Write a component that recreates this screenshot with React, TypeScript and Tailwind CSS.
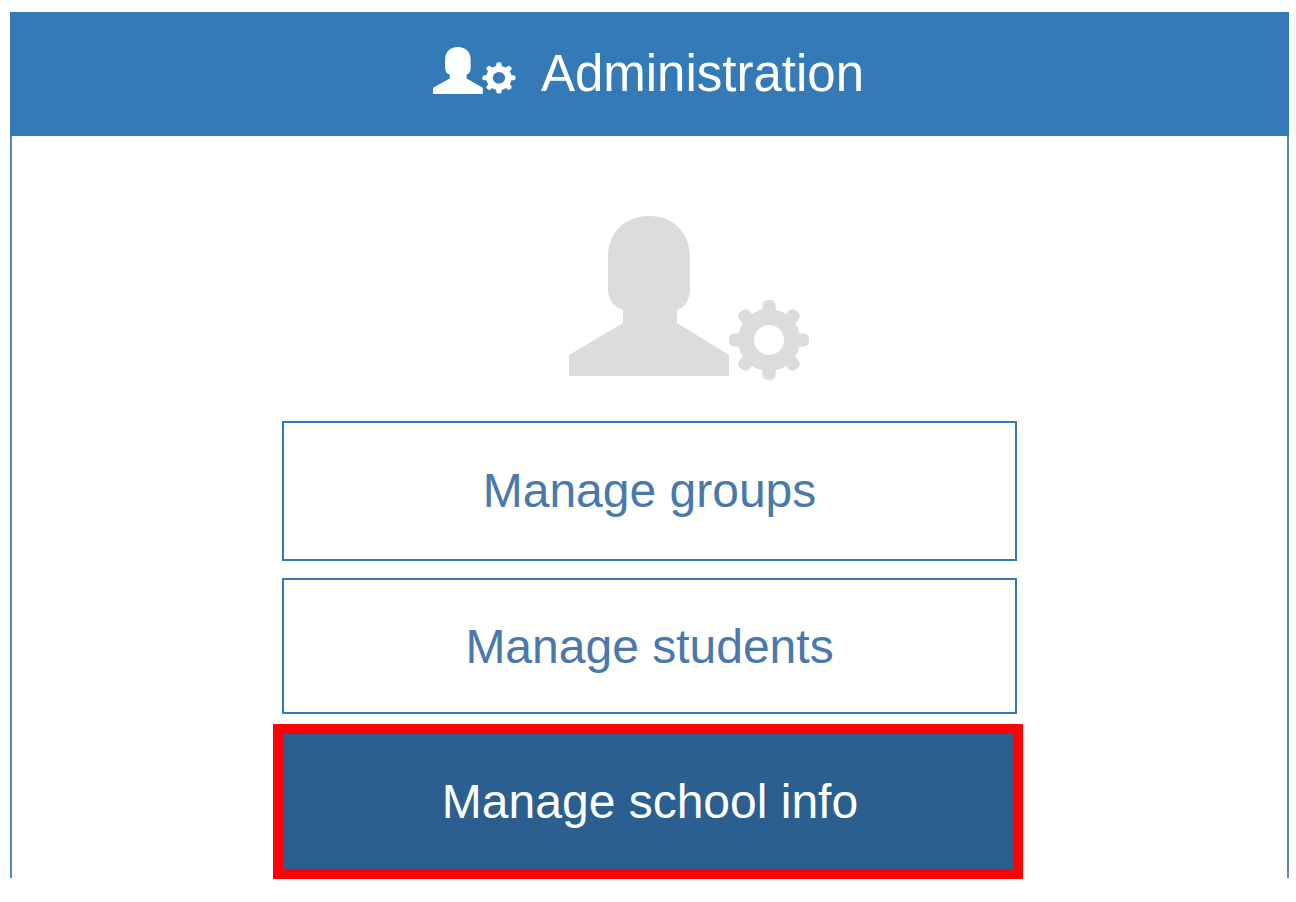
const TEETH = [0, 45, 90, 135, 180, 225, 270, 315]

interface AdminIconProps {
  className: string
  fill: string
  gearX: number
  gearY: number
  gearSize: number
  stretch?: boolean
}

// person plus gear, person is 160 units wide
function AdminIcon({ className, fill, gearX, gearY, gearSize, stretch }: AdminIconProps) {
  const scale = gearSize / 40
  return (
    <svg className={className} viewBox="0 0 270 160" fill={fill} preserveAspectRatio={stretch ? 'none' : undefined}>
      <path d="M80 0C106 0 121 18 121 42V72C121 84 116 91 108 94V107L160 139V160H0V139L54 107V94C45 91 39 84 39 72V42C39 18 54 0 80 0Z" />
      <g transform={`translate(${gearX} ${gearY}) scale(${scale})`}>
        <circle r="23" fill="none" stroke={fill} strokeWidth="16" />
        {TEETH.map((angle) => (
          <rect key={angle} x="-6.5" y="-40" width="13" height="16" rx="5" transform={`rotate(${angle})`} />
        ))}
      </g>
    </svg>
  )
}

export default function App() {
  return (
    <div className="h-[902px] w-[1296px] overflow-hidden bg-white pl-[10px] pt-3 font-['Liberation_Sans',Arial,sans-serif]">
      <section className="h-[866px] w-[1279px] border-x-2 border-[#4f8bc0]">
        <header className="-mx-[2px] flex h-[124px] items-center justify-center bg-[#337ab7] pb-[2px] pr-[2px] text-white">
          <AdminIcon className="mb-[5px] h-[47px] w-[84px]" fill="#ffffff" gearX={212} gearY={105} gearSize={53} stretch />
          <h1 className="ml-6 text-[51px] font-normal leading-none">Administration</h1>
        </header>

        <div className="flex flex-col items-center pt-20">
          <AdminIcon className="ml-[109px] h-[160px] w-[270px] overflow-visible" fill="#dcdcdc" gearX={200} gearY={124} gearSize={40} />

          <button className="mt-[45px] h-[140px] w-[735px] border-2 border-[#337ab7] bg-white text-[48px] text-[#4a78ab]">
            Manage groups
          </button>
          <button className="mt-[17px] h-[136px] w-[735px] border-2 border-[#337ab7] bg-white pt-[2px] text-[48px] text-[#4a78ab]">
            Manage students
          </button>
          <div className="-ml-[3px] mt-[10px] h-[155px] w-[750px] border-[10px] border-[#ff0000]">
            <button className="h-full w-full border-2 border-[#286090] bg-[#2a5f8f] pl-1 text-[48px] text-white">
              Manage school info
            </button>
          </div>
        </div>
      </section>
    </div>
  )
}
